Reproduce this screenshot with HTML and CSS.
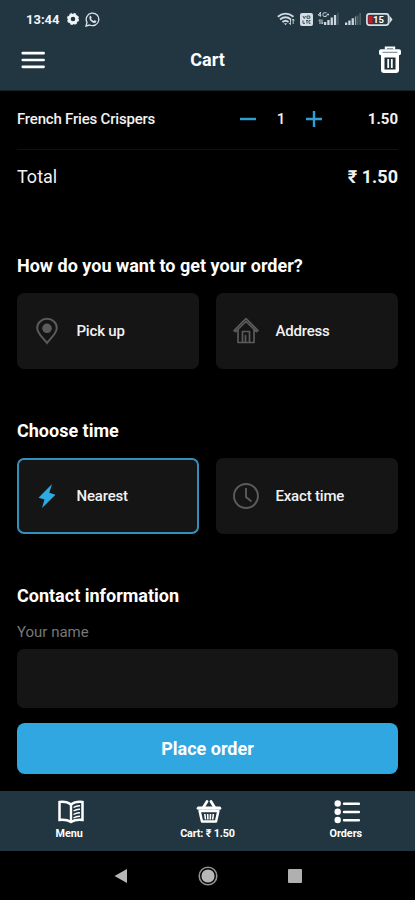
FILE: index.html
```html
<!DOCTYPE html>
<html lang="en">
<head>
<meta charset="utf-8">
<meta name="viewport" content="width=device-width, initial-scale=1">
<title>Cart</title>
<link rel="stylesheet" href="styles.css">
</head>
<body>
<div class="app">
  <header class="top">
    <div class="status">
      <div class="status-left">
        <span class="clock">13:44</span>
        <svg width="12" height="12" viewBox="0 0 12 12"><circle cx="6" cy="6" r="3.8" fill="none" stroke="#f0f5fa" stroke-width="3"/><circle cx="6" cy="6" r="5.4" fill="none" stroke="#f0f5fa" stroke-width="1.2" stroke-dasharray="2.6 1.64"/></svg>
        <svg width="15" height="15" viewBox="0 0 15 15"><path d="M1 14l1-3.6A6.3 6.3 0 1 1 4.7 13z" fill="none" stroke="#dce4ea" stroke-width="1.3"/><path d="M4.8 3.9c.8-.6 1.2 0 1.8 1.3.2.5-.4.9-.6 1.3.6 1.2 1.4 2 2.6 2.5.5-.3.8-1 1.2-.8l1.5.8c.2 1.3-1 2-2.1 1.9C6.300 10.300 3.300 7.100 4.800 3.900z" fill="#dce4ea"/></svg>
      </div>
      <div class="status-right">
        <svg width="18" height="14" viewBox="0 0 18 14" fill="none" stroke="#cfdae1"><path d="M.8 4.800Q8.500-1.500 16.500 4.800M3 7.500q5.500-4.500 11 0M5.400 10q3.200-2.600 6.200 0" stroke-width="1.8"/><path d="M7 11.300h3l-1.500 2z" fill="#cfdae1" stroke="none"/><path d="M13.500 7v5.500m-1.500-1.500 1.500 1.700M16.200 12V7m-1.300 1.500L16.200 7l1.200 1.500" stroke-width=".9"/></svg>
        <svg class="volte" width="13" height="13" viewBox="0 0 13 13"><rect width="13" height="13" rx="2" fill="#d3dde3"/><path d="M3 3l1.300 2.500L5.500 3M7 3h2.800v2.300H7zM3 7.500v2.800h2M6 7.500h2M7 7.500v3M10.500 7.500H9v2.800h1.500" fill="none" stroke="#39505e"/></svg>
        <svg class="signal-a" width="21" height="14" viewBox="0 0 21 14"><g fill="#cbd6dd"><path d="M6 10h2.300v3H6zM9.300 8h2.300v5H9.300zM12.600 5.500h2.300V13h-2.300zM15.900 3h2.300v10h-2.300z"/><path d="M19.200 1h1.500v12h-1.500z" opacity=".25"/></g><path d="M2.300 0v4.800M.2 3.200h3M3 0 .2 3M8.500.8H6.200a1.300 1.300 0 0 0-1.200 1.500v1a1.200 1.200 0 0 0 1.200 1.200h2V2.800M9 2.500h2M10 1.500v2M2 12V7.500M.8 8.800 2 7.500M4 7.500V12l1-1.500" fill="none" stroke="#cbd6dd"/></svg>
        <svg class="signal-b" width="17" height="14" viewBox="0 0 17 14" fill="#cbd6dd"><path d="M0 10.500h2.300V13H0zM3.300 8.500h2.300V13H3.300zM6.600 6.300h2.300V13H6.600z"/><path d="M9.900 4.500h1.200V13H9.900z" opacity=".7"/><path d="M11.500 3.500h2V13h-2zM14.300 1h1.700v12h-1.700z" opacity=".25"/></svg>
        <svg width="27" height="13" viewBox="0 0 27 13"><rect x=".9" y=".9" width="21.700" height="11.200" rx="2.500" fill="#293a44" stroke="#d7dfe5" stroke-width="1.700"/><path d="M23.500 2.500 26.500 6.500l-3 4z" fill="#d7dfe5"/><path d="M2.500 3h4v7h-4z" fill="#d3151f"/><text x="7" y="10" class="battery-text">15</text></svg>
      </div>
    </div>
    <div class="titlebar">
      <svg class="burger" width="24" height="18" viewBox="0 0 24 18" stroke="#fff" stroke-width="2.700" stroke-linecap="round"><path d="M1.800 2.200h20.800M1.800 9h20.800M1.800 15.800h20.800"/></svg>
      <h1>Cart</h1>
      <svg class="trash" width="24" height="28" viewBox="0 0 24 28"><path d="M7.800 3.500V1.500h8.400v2" fill="none" stroke="#fff" stroke-width="2"/><rect x="1" y="3.300" width="22" height="6" rx="2" fill="#fff"/><path d="M3 9h18v15a3 3 0 0 1-3 3H6a3 3 0 0 1-3-3z" fill="#fff"/><path d="M4.500 6.300h15" stroke="#6e7f88"/><path d="M6.500 11.500h11v12h-11z" fill="#1f2f37"/><path d="M10.200 13v9M13.800 13v9" stroke="#fff" stroke-width="1.800"/></svg>
    </div>
  </header>

  <main>
    <div class="item">
      <span class="item-name">French Fries Crispers</span>
      <div class="stepper">
        <svg width="16" height="16" viewBox="0 0 16 16"><path d="M0 8h16" stroke="#2e9fd3" stroke-width="2.400"/></svg>
        <span class="qty">1</span>
        <svg width="16" height="16" viewBox="0 0 16 16"><path d="M0 8h16M8 0v16" stroke="#2e9fd3" stroke-width="2.400"/></svg>
      </div>
      <span class="price">1.50</span>
    </div>
    <div class="total"><span class="total-label">Total</span><span class="total-sum">₹ 1.50</span></div>

    <section>
      <h2>How do you want to get your order?</h2>
      <div class="options">
        <div class="option">
          <svg width="26" height="28" viewBox="0 0 26 28"><path d="M13 26C9.500 21.500 3.200 16.500 3.200 11a9.800 9.300 0 0 1 19.600 0C22.800 16.500 16.500 21.500 13 26z" fill="none" stroke="#5b5b5b" stroke-width="2"/><circle cx="13" cy="11.300" r="4.800" fill="#5b5b5b"/></svg>
          <span>Pick up</span>
        </div>
        <div class="option">
          <svg width="26" height="28" viewBox="0 0 26 28" fill="none" stroke="#5b5b5b" stroke-width="1.700" stroke-linejoin="round" stroke-linecap="round"><path d="M1 13.500 13 1.700l12 11.800-1.500 1.200L13 4.500 2.500 14.700zM5 13v12.500h16V13M9.500 25V14.500h7V25M12.500 25v-6.500"/></svg>
          <span>Address</span>
        </div>
      </div>
    </section>

    <section>
      <h2>Choose time</h2>
      <div class="options">
        <div class="option selected">
          <svg width="26" height="28" viewBox="0 0 26 28"><path d="M18 2 4.500 15.800l6 1.700L8 26 21.500 12.800l-6.200-2z" fill="#2fa9e2"/></svg>
          <span>Nearest</span>
        </div>
        <div class="option">
          <svg width="26" height="28" viewBox="0 0 26 28" fill="none" stroke="#5b5b5b" stroke-width="1.900"><circle cx="13" cy="14" r="12"/><path d="M13 6v9l5.500 4.500"/></svg>
          <span>Exact time</span>
        </div>
      </div>
    </section>

    <section>
      <h2>Contact information</h2>
      <label for="name">Your name</label>
      <input id="name" type="text">
    </section>
    <button type="button">Place order</button>
  </main>

  <nav class="tabs">
    <div class="tab">
      <svg width="26" height="24" viewBox="0 0 26 24" fill="none" stroke="#fff"><path d="M13 4.500C9.500 1.800 6 1.500 1.500 2v18c4.500-.4 8-.2 11.500 2 3.500-2.200 7-2.400 11.500-2V2C20 1.500 16.500 1.800 13 4.500z" stroke-width="2.500"/><path d="M13 4v18" stroke-width="2.400"/><path d="M15.500 7.500q3-2 6.500-1.800M15.500 11q3-2 6.500-1.800M15.500 14.500q3-2 6.500-1.800M15.500 18q3-2 6.500-1.800" stroke-width="1.500"/></svg>
      <span>Menu</span>
    </div>
    <div class="tab">
      <svg width="26" height="24" viewBox="0 0 26 24" fill="none" stroke="#fff"><path d="M7 8 11 1.500M19 8 15 1.500" stroke-width="2.700" stroke-linecap="round"/><path d="M2.300 8.200h21.400" stroke-width="3.200" stroke-linecap="round"/><path d="M3.600 11 6 21.500h14l2.400-10.500z" stroke-width="2.500" stroke-linejoin="round"/><path d="M8.800 14l.7 5.500M11.700 14l.2 5.500M14.500 14l-.2 5.500M17.400 14l-.7 5.500" stroke-width="1.600"/></svg>
      <span class="t-cart">Cart: ₹ 1.50</span>
    </div>
    <div class="tab">
      <svg width="26" height="24" viewBox="0 0 26 24"><g fill="#fff"><circle cx="3.700" cy="3.500" r="3.200"/><circle cx="3.700" cy="11.800" r="3.200"/><circle cx="3.700" cy="20" r="3.200"/></g><path d="M10 3.800h15M10 12h15M10 20.200h15" stroke="#fff" stroke-width="2.400" stroke-linecap="round"/></svg>
      <span>Orders</span>
    </div>
  </nav>

  <div class="sysnav">
    <svg width="14" height="16" viewBox="0 0 14 16"><path d="M13 1v14L.5 8z" fill="#b7b7b7"/></svg>
    <svg width="20" height="20" viewBox="0 0 20 20"><circle cx="10" cy="10" r="8.800" fill="none" stroke="#929292" stroke-width="1.600"/><circle cx="10" cy="10" r="6.600" fill="#b7b7b7"/></svg>
    <svg width="14" height="14" viewBox="0 0 14 14"><rect width="14" height="14" rx="1" fill="#b0b0b0"/></svg>
  </div>
</div>
</body>
</html>
```
FILE: styles.css
```css
* { box-sizing: border-box; }
body { margin: 0; background: #000; color: #f2f2f2; font-family: Roboto, "Noto Sans", sans-serif; }
svg { display: block; flex: none; }
h1, h2 { margin: 0; font-weight: 700; color: #fff; white-space: nowrap; }
.app { width: 415px; height: 900px; display: flex; flex-direction: column; overflow: hidden; }

.top { height: 91px; background: #213641; border-bottom: 1px solid #172126; }
.status { height: 38px; display: flex; justify-content: space-between; padding: 0 22px 0 26px; align-items: center; }
.status-left { display: flex; align-items: center; gap: 6px; }
.clock { font-size: 13px; font-weight: 700; color: #f0f5fa; width: 35px; }
.status-right { display: flex; align-items: center; }
.volte { margin-left: 5px; }
.signal-a { margin-left: 5px; }
.signal-b { margin: 0 4px 0 6px; }
.battery-text { font-size: 9.5px; font-weight: 700; fill: #fff; }
.titlebar { height: 44px; display: grid; grid-template-columns: 1fr auto 1fr; align-items: center; padding: 0 13px 0 21px; }
.titlebar h1 { font-size: 18px; transform: translate(-4px, -1px); }
.trash { justify-self: end; }

main { height: 700px; padding: 0 17px; display: flex; flex-direction: column; }
.item { height: 59px; padding-bottom: 3px; display: flex; align-items: center; border-bottom: 1px solid #111; font-size: 15px; font-weight: 500; }
.item-name { width: 223px; white-space: nowrap; letter-spacing: -.2px; }
.stepper { width: 82px; display: flex; align-items: center; justify-content: space-between; }
.price { margin-left: auto; font-weight: 700; }
.total { height: 54px; padding-bottom: 1px; display: flex; align-items: center; justify-content: space-between; font-size: 18px; }
.total-sum { font-weight: 700; }
h2 { font-size: 18px; line-height: 24px; }
section { margin-top: 50px; }
section + section { margin-top: 50px; }
.options { display: grid; grid-template-columns: 1fr 1fr; gap: 17px; margin-top: 15px; }
.option { height: 76px; border-radius: 7px; background: #151515; display: flex; align-items: center; gap: 17px; padding-left: 16.5px; font-size: 15px; font-weight: 500; letter-spacing: -.2px; }
.selected { border: 2px solid #348fbd; padding-left: 14.5px; }
label { display: block; font-size: 15px; line-height: 20px; margin-top: 14px; color: #777; }
input { display: block; width: 100%; height: 59px; margin-top: 7px; border: 0; border-radius: 7px; background: #151515; color: #fff; padding: 0 16px; font: 15px Roboto, sans-serif; }
button { flex: none; height: 51px; margin-top: 15px; border: 0; border-radius: 8px; background: #30a7e0; color: #fff; font: 700 18px Roboto, sans-serif; }

.tabs { height: 60px; display: grid; grid-template-columns: repeat(3, 1fr); background: #213641; }
.tab { display: flex; flex-direction: column; align-items: center; padding-top: 9px; font-size: 10.8px; font-weight: 700; line-height: 13px; color: #fff; gap: 3px; white-space: nowrap; }
.tab svg { margin-left: 3px; }
.t-cart { letter-spacing: -.15px; }
.sysnav { height: 49px; display: flex; align-items: center; justify-content: center; gap: 70px; }
```
